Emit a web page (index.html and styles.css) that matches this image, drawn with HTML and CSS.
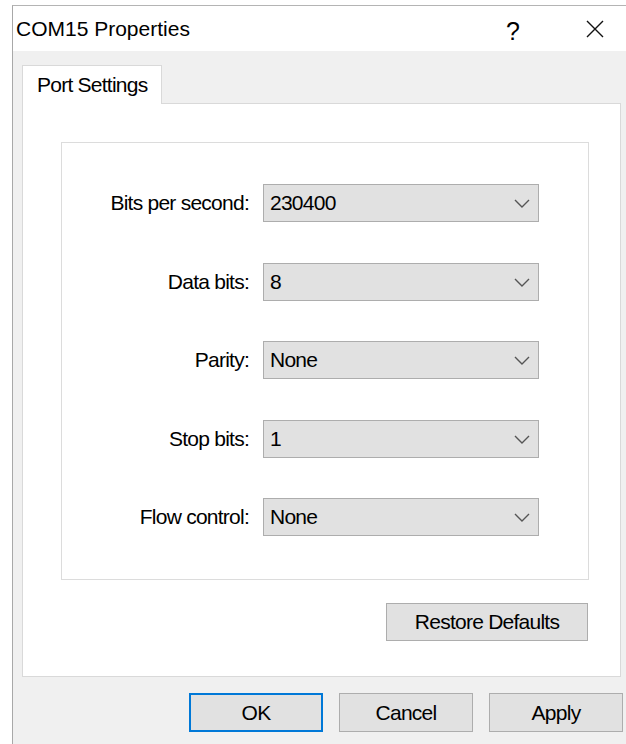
FILE: index.html
```html
<!DOCTYPE html>
<html lang="en">
<head>
<meta charset="utf-8">
<title>COM15 Properties</title>
<link rel="stylesheet" href="styles.css">
</head>
<body>
<div class="window">
  <div class="titlebar">
    <span class="title">COM15 Properties</span>
    <span class="help">?</span>
    <span class="close">
      <svg width="18" height="18" viewBox="0 0 18 18"><path d="M1 1 L17 17 M17 1 L1 17" stroke="#111" stroke-width="1.4" fill="none"/></svg>
    </span>
  </div>
  <div class="client">
    <div class="tabs">
      <div class="tab">Port Settings</div>
    </div>
    <div class="panel">
      <div class="group">
        <div class="form">
          <label class="label">Bits per second:</label>
          <div class="combo"><span>230400</span><svg class="chev" width="16" height="9" viewBox="0 0 16 9"><path d="M1 1 L8 8 L15 1" stroke="#555" stroke-width="1.4" fill="none"/></svg></div>
          <label class="label">Data bits:</label>
          <div class="combo"><span>8</span><svg class="chev" width="16" height="9" viewBox="0 0 16 9"><path d="M1 1 L8 8 L15 1" stroke="#555" stroke-width="1.4" fill="none"/></svg></div>
          <label class="label">Parity:</label>
          <div class="combo"><span>None</span><svg class="chev" width="16" height="9" viewBox="0 0 16 9"><path d="M1 1 L8 8 L15 1" stroke="#555" stroke-width="1.4" fill="none"/></svg></div>
          <label class="label">Stop bits:</label>
          <div class="combo"><span>1</span><svg class="chev" width="16" height="9" viewBox="0 0 16 9"><path d="M1 1 L8 8 L15 1" stroke="#555" stroke-width="1.4" fill="none"/></svg></div>
          <label class="label">Flow control:</label>
          <div class="combo"><span>None</span><svg class="chev" width="16" height="9" viewBox="0 0 16 9"><path d="M1 1 L8 8 L15 1" stroke="#555" stroke-width="1.4" fill="none"/></svg></div>
        </div>
      </div>
      <div class="panel-actions">
        <button class="btn btn-restore">Restore Defaults</button>
      </div>
    </div>
    <div class="actions">
      <button class="btn btn-default">OK</button>
      <button class="btn">Cancel</button>
      <button class="btn">Apply</button>
    </div>
  </div>
</div>
</body>
</html>
```

FILE: styles.css
```css
html, body {
  margin: 0;
  padding: 0;
  background: #ffffff;
  overflow: hidden;
}

body {
  width: 626px;
  height: 744px;
  font-family: "Liberation Sans", Arial, sans-serif;
  font-size: 21px;
  letter-spacing: -0.75px;
  color: #000;
}

.window {
  margin: 5px 0 0 12px;
  width: 630px;
  height: 760px;
  border-top: 1px solid #b4b4b4;
  border-left: 1px solid #a8a8a8;
  background: #f0f0f0;
}

.titlebar {
  height: 45px;
  background: #ffffff;
  display: flex;
  align-items: center;
  position: relative;
}

.title {
  padding-left: 3px;
  letter-spacing: 0;
}

.help {
  position: absolute;
  left: 493px;
  top: 11px;
  font-size: 25px;
  letter-spacing: 0;
}

.close {
  position: absolute;
  left: 573px;
  top: 14px;
  display: flex;
}

.client {
  padding: 14px 0 0 9px;
}

.tabs {
  display: flex;
  height: 38px;
}

.tab {
  width: 140px;
  height: 39px;
  border: 1px solid #d9d9d9;
  border-bottom: none;
  background: #ffffff;
  padding-left: 14px;
  box-sizing: border-box;
  display: flex;
  align-items: center;
  position: relative;
  z-index: 1;
}

.panel {
  width: 599px;
  height: 574px;
  box-sizing: border-box;
  border: 1px solid #d9d9d9;
  background: #ffffff;
  padding: 38px 0 0 38px;
}

.group {
  width: 528px;
  height: 438px;
  box-sizing: border-box;
  border: 1px solid #dcdcdc;
  padding-top: 41px;
}

.form {
  display: grid;
  grid-template-columns: 187px 276px;
  column-gap: 14px;
  row-gap: 40.5px;
  align-items: center;
}

.label {
  text-align: right;
}

.combo {
  height: 38px;
  box-sizing: border-box;
  border: 1px solid #adadad;
  background: #e1e1e1;
  display: flex;
  align-items: center;
  justify-content: space-between;
  padding: 0 8px 0 6px;
}

.chev {
  margin-top: 1px;
}

.panel-actions {
  display: flex;
  justify-content: flex-end;
  width: 527px;
  margin-top: 23px;
}

.btn {
  font-family: "Liberation Sans", Arial, sans-serif;
  font-size: 21px;
  letter-spacing: -0.75px;
  color: #000;
  background: #e1e1e1;
  border: 1px solid #adadad;
  height: 39px;
  width: 134px;
  padding: 0;
  margin: 0;
  box-sizing: border-box;
}

.btn-restore {
  width: 202px;
  height: 38px;
}

.btn-default {
  border: 2px solid #0078d7;
}

.actions {
  display: flex;
  gap: 16px;
  margin-top: 16px;
  padding-left: 167px;
}
```
